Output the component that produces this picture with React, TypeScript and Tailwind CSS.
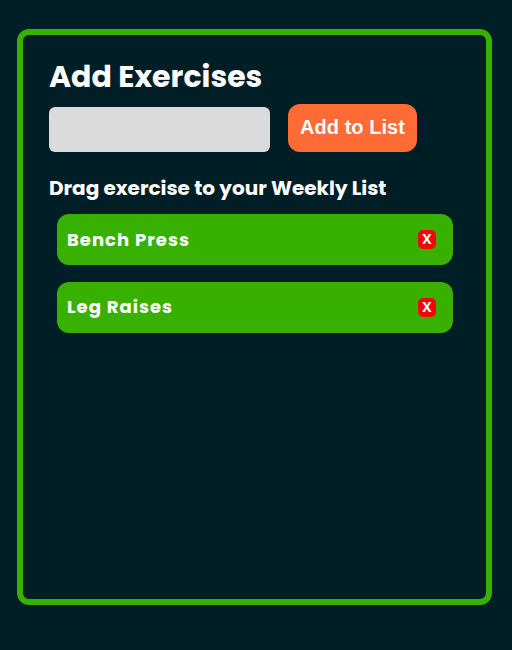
const exercises = ["Bench Press", "Leg Raises"];

export default function App() {
  return (
    <main className="h-[650px] w-[512px] overflow-hidden bg-[#001e26] pt-[29px] pl-[17px] font-['Poppins','Inter',sans-serif] text-white">
      <section className="h-[576px] w-[475px] rounded-[12px] border-6 border-[#38b000] pt-[25px] pl-[26px]">
        <h1 className="h-[44px] text-[30px] leading-[34px] font-bold whitespace-nowrap">Add Exercises</h1>
        <div className="flex h-[48px] gap-[18px]">
          <input className="mt-[3px] h-[45px] w-[221px] rounded-[6px] bg-[#dbdbdb] px-2 text-black outline-none" />
          <button className="h-[48px] w-[129px] rounded-[12px] bg-[#ff6b35] pb-[2px] font-['Liberation_Sans',sans-serif] text-[20px] font-bold tracking-[0.03px] whitespace-nowrap">Add to List</button>
        </div>
        <h2 className="mt-[21px] h-[41px] text-[20px] leading-[30px] font-bold whitespace-nowrap">Drag exercise to your Weekly List</h2>
        <ul className="ml-[8px] flex w-[396px] flex-col gap-[16.6px]">
          {exercises.map((name) => (
            <li key={name} className="flex h-[51px] items-center justify-between rounded-[12px] bg-[#38b000] pr-[17px] pl-[10px]">
              <span className="pb-[0.6px] text-[18px] leading-[27px] font-bold tracking-[1px]">{name}</span>
              <button className="h-[19px] w-[18px] rounded-[5px] bg-[#ff0000] pb-[0.6px] font-['Noto_Sans',sans-serif] text-[14px] leading-[18.4px] font-bold">X</button>
            </li>
          ))}
        </ul>
      </section>
    </main>
  );
}
